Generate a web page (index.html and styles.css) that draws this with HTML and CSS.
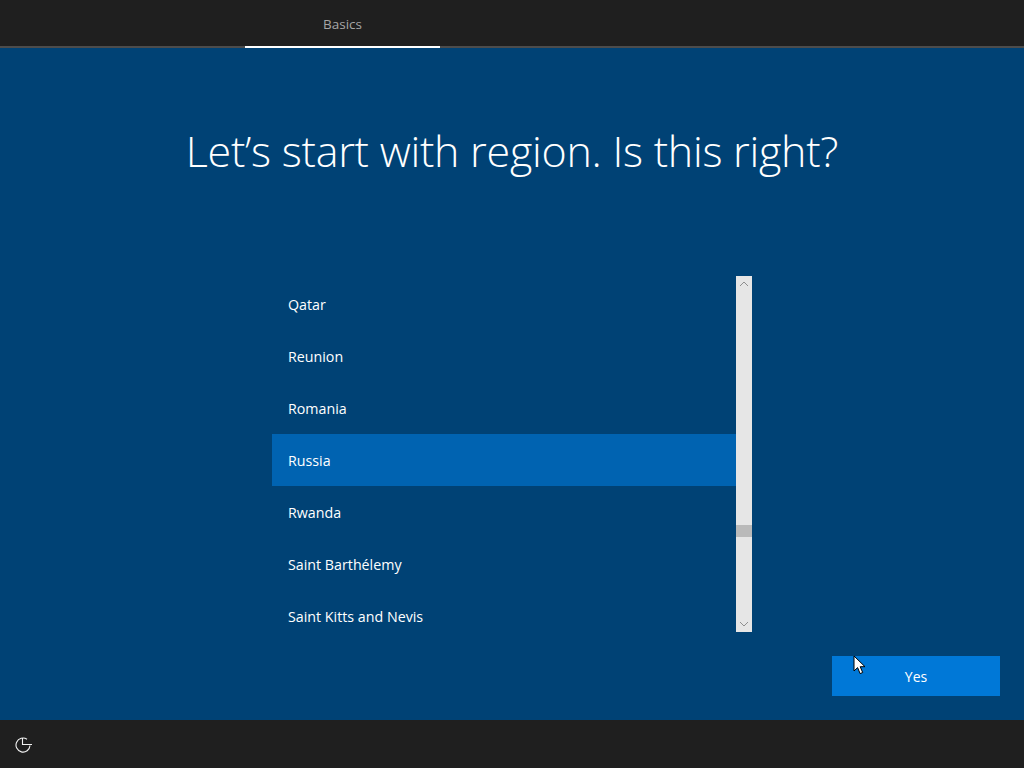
FILE: index.html
```html
<!DOCTYPE html>
<html lang="en">
<head>
<meta charset="utf-8">
<title>Basics</title>
<link rel="stylesheet" href="styles.css">
</head>
<body>
<div class="page">
  <header class="topbar">
    <div class="tab">Basics</div>
  </header>
  <main class="main">
    <h1 class="title">Let’s start with region. Is this right?</h1>
    <div class="picker">
      <div class="list">
        <div class="rows">
          <div class="row">Qatar</div>
          <div class="row">Reunion</div>
          <div class="row">Romania</div>
          <div class="row selected">Russia</div>
          <div class="row">Rwanda</div>
          <div class="row">Saint Barthélemy</div>
          <div class="row">Saint Kitts and Nevis</div>
        </div>
      </div>
      <div class="scrollbar">
        <svg class="arrow" width="16" height="16" viewBox="0 0 16 16"><path d="M4 10l4-4 4 4" fill="none" stroke="#8f8f8f" stroke-width="1"/></svg>
        <div class="track"><div class="thumb"></div></div>
        <svg class="arrow" width="16" height="16" viewBox="0 0 16 16"><path d="M4 6l4 4 4-4" fill="none" stroke="#8f8f8f" stroke-width="1"/></svg>
      </div>
    </div>
    <div class="actions">
      <button class="yes">Yes</button>
      <svg class="cursor" width="13" height="20" viewBox="0 0 13 20"><path d="M1 1v15l3.6-3.4 2.5 6 2.6-1.1-2.5-5.8H12z" fill="#fff" stroke="#000" stroke-width="1"/></svg>
    </div>
  </main>
  <footer class="footer">
    <svg class="access" width="18" height="18" viewBox="0 0 18 18" fill="none" stroke="#f2f2f2" stroke-width="1.1">
      <path d="M12 4.3A7 7 0 1 0 15 10.5"/>
      <path d="M7.5 3V9.5H17"/>
    </svg>
  </footer>
</div>
</body>
</html>
```
FILE: styles.css
```css
* { box-sizing: border-box; }
html, body { margin: 0; padding: 0; }
body { font-family: "Open Sans", "Noto Sans", sans-serif; color: #fff; background: #004275; }
.page { width: 1024px; height: 768px; display: flex; flex-direction: column; overflow: hidden; }
.topbar { height: 48px; background: #1f1f1f; border-bottom: 2px solid #4c4c4c; padding-left: 245px; display: flex; flex: none; }
.tab { width: 195px; height: 48px; border-bottom: 2px solid #fff; color: #a6a6a6; font-size: 13.5px; text-align: center; padding-top: 14px; line-height: 20px; }
.main { flex: 1; background: #004275; display: flex; flex-direction: column; min-height: 0; }
.title { margin: 73px 0 0; height: 60px; font-size: 43px; font-weight: 300; line-height: 60px; letter-spacing: -0.26px; text-align: center; color: #fff; }
.picker { margin: 95px 0 0 272px; width: 480px; height: 356px; display: flex; flex: none; }
.list { width: 464px; height: 356px; overflow: hidden; padding-top: 2px; }
.row { height: 52px; padding-left: 16px; line-height: 54px; font-size: 14.25px; color: #fff; }
.row.selected { background: #0063b1; }
.scrollbar { width: 16px; height: 356px; background: #e6e6e6; display: flex; flex-direction: column; }
.arrow { display: block; flex: none; }
.track { flex: 1; position: relative; }
.thumb { position: absolute; left: 0; top: 233px; width: 16px; height: 12px; background: #bababa; }
.actions { margin: 24px 24px 0 0; display: flex; justify-content: flex-end; position: relative; }
.yes { width: 168px; height: 40px; border: 0; padding: 0; background: #0078d7; color: #fff; font-family: inherit; font-size: 14px; }
.cursor { position: absolute; left: 853px; top: -1px; }
.footer { height: 48px; background: #1f1f1f; flex: none; display: flex; align-items: center; padding-left: 15px; }
.access { display: block; }
```
